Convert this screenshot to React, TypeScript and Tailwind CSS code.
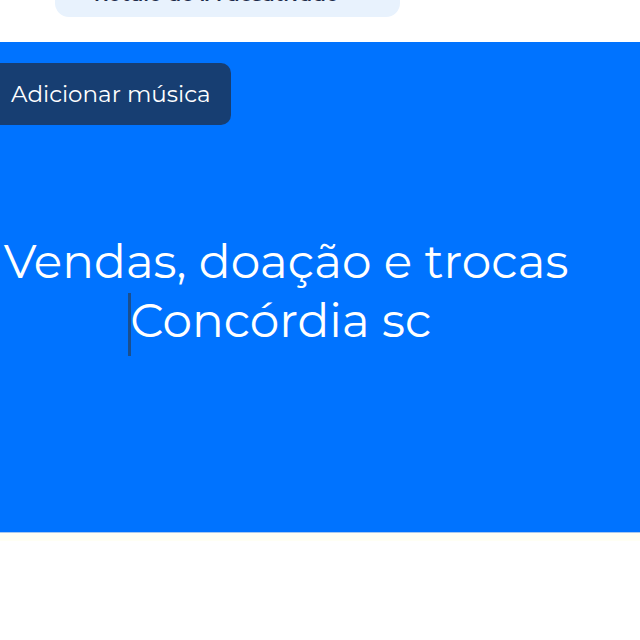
import React from "react";

export default function App() {
  const font = { fontFamily: '"Montserrat", "Open Sans", "DejaVu Sans", sans-serif' };
  return (
    <div className="w-[640px] h-[640px] bg-white overflow-hidden" style={font}>
      <div className="h-[42px] pl-[55px] flex items-start">
        <div className="w-[345px] h-[46px] -mt-[29px] rounded-[14px] bg-[#e8f2fd] flex items-center pl-[22px] gap-3 text-[#1c2b4a] text-[20px] font-semibold">
          <span className="text-[#8a99b0] text-[14px]">•</span>
          <span>Rótulo de IA desativado</span>
        </div>
      </div>
      <div className="h-[490px] bg-[#0073ff] flex flex-col">
        <div className="pt-[21px]">
          <div className="w-[231px] h-[62px] bg-[#173e72] rounded-r-[10px] flex items-center pl-[11px] text-white text-[23px]">
            Adicionar música
          </div>
        </div>
        <div className="mt-[107px] w-[572px] text-center text-white text-[47px] leading-[59px]">
          <div>Vendas, doação e trocas</div>
          <div>
            <span className="inline-block align-middle w-[3px] h-[63px] bg-[#1a4f8f] -mr-[1px]"></span>Concórdia sc&nbsp;
          </div>
        </div>
      </div>
      <div className="h-[1px] bg-[#a9c9ef]"></div>
      <div className="h-[8px] bg-[#fffff4]"></div>
    </div>
  );
}
